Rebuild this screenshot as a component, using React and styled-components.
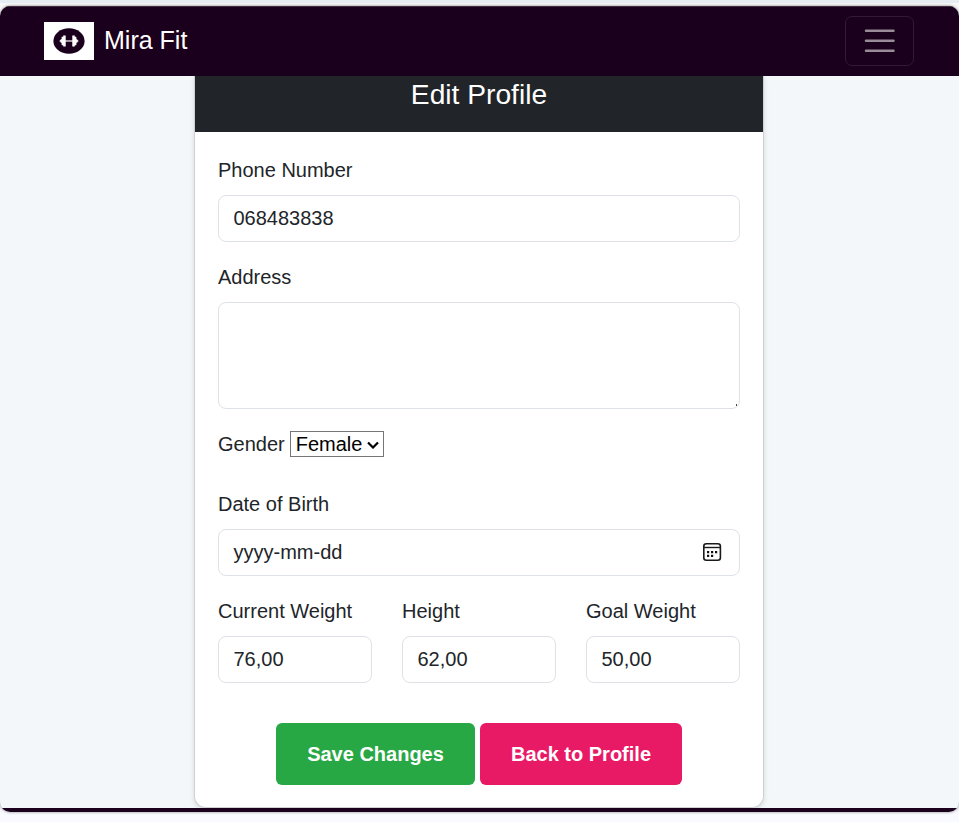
import React from 'react';
import styled, { createGlobalStyle } from 'styled-components';

const GlobalStyle = createGlobalStyle`
  *, *::before, *::after { box-sizing: border-box; }
  body {
    margin: 0;
    overflow: hidden;
    background: linear-gradient(#e6edf2 0 3px, #f8f8f8 3px 20px, #f9faff 790px);
    color: #212529;
    font: 20px/30px "Liberation Sans", Arial, sans-serif;
  }
`;

const Page = styled.div`
  height: 822px;
  padding-top: 6px;
`;

const Frame = styled.div`
  display: flex;
  flex-direction: column;
  height: 806px;
  overflow: hidden;
  border-radius: 10px;
  background: #f3f7fa;
  box-shadow: 0 0 3px rgba(0, 0, 0, 0.5);
`;

const Navbar = styled.header`
  display: flex;
  flex: none;
  align-items: center;
  justify-content: space-between;
  height: 70px;
  padding: 0 45px 1px 44px;
  background: #1b001d;
  border-top: 1px solid #3f2a42;
`;

const Brand = styled.a`
  display: flex;
  align-items: center;
  gap: 10px;
  color: #fff;
  font-size: 25px;
`;

const BrandName = styled.span`
  padding-bottom: 2px;
`;

const Logo = styled.svg`
  display: block;
  width: 50px;
  height: 38px;
  background: #fff;
`;

const Toggler = styled.button`
  display: flex;
  align-items: center;
  justify-content: center;
  width: 69px;
  height: 50px;
  padding: 0;
  border: 1px solid #321935;
  border-radius: 7px;
  background: transparent;
`;

const Main = styled.main`
  display: flex;
  flex: none;
  justify-content: center;
  height: 732px;
  padding-right: 1px;
`;

const Card = styled.section`
  display: flex;
  flex-direction: column;
  width: 570px;
  height: 732px;
  border: 1px solid #cfd0d1;
  border-top: 0;
  border-radius: 0 0 12px 12px;
  background: #fff;
  box-shadow: 0 2px 5px rgba(0, 0, 0, 0.12);
`;

const CardHeader = styled.h1`
  height: 56px;
  margin: 0;
  padding-top: 1px;
  background: #212529;
  color: #fff;
  font-size: 28.2px;
  font-weight: 400;
  line-height: 35px;
  text-align: center;
`;

const Form = styled.form`
  display: flex;
  flex-direction: column;
  gap: 20px;
  padding: 23px 23px 0;
`;

const Field = styled.div`
  display: flex;
  flex-direction: column;
  gap: 10px;
  min-width: 0;
`;

const Label = styled.label`
  height: 30px;
  white-space: nowrap;
`;

const Input = styled.input`
  width: 100%;
  height: 47px;
  padding: 0 14.5px;
  border: 1px solid #dee2e6;
  border-radius: 8px;
  background: #fff;
  color: #212529;
  font: inherit;
  outline: 0;
`;

const TextArea = styled(Input)`
  display: block;
  height: 107px;
  padding: 7px 15px;
  resize: vertical;

  &::-webkit-resizer {
    background: linear-gradient(#444, #444) no-repeat right 2px bottom 2px / 1px 2px;
  }
`;

const DateControl = styled.div`
  display: flex;
  align-items: center;
  justify-content: space-between;
  height: 47px;
  padding: 0 17px 2px 14.5px;
  border: 1px solid #dee2e6;
  border-radius: 8px;
`;

const GenderRow = styled.div`
  display: flex;
  align-items: center;
  gap: 5px;
  height: 30px;
  margin-bottom: 10px;
`;

const SelectBox = styled.div`
  display: grid;
  width: 94px;
  height: 26px;

  > * {
    grid-area: 1 / 1;
  }
`;

const Select = styled.select`
  appearance: none;
  width: 94px;
  height: 26px;
  padding: 0 0 0 5px;
  border: 1px solid #767676;
  border-radius: 0;
  background: #fff;
  color: #000;
  font: 20px "Liberation Sans", Arial, sans-serif;
`;

const Chevron = styled.svg`
  align-self: center;
  justify-self: end;
  width: 12px;
  height: 8px;
  margin: 1px 5px 0 0;
  pointer-events: none;
`;

const Measurements = styled.div`
  display: grid;
  grid-template-columns: repeat(3, 1fr);
  gap: 30px;
`;

const Actions = styled.div`
  display: flex;
  justify-content: center;
  gap: 5px;
  margin-top: 20px;
`;

const Button = styled.button`
  width: ${({ $width }) => $width}px;
  height: 62px;
  padding: 0;
  border: 0;
  border-radius: 6px;
  background: ${({ $color }) => $color};
  color: #fff;
  font: bold 20px "Liberation Sans", Arial, sans-serif;
`;

const Footer = styled.footer`
  flex: 1;
  background: #1b001d;
`;

function DumbbellLogo() {
  return (
    <Logo viewBox="0 0 50 38" aria-hidden="true">
      <ellipse cx="25" cy="19" rx="15.6" ry="12.8" fill="#1b001d" />
      <path d="M21 19h8" stroke="#d0c8d1" strokeWidth="1.7" />
      <path
        d="M15.7 19l2.2-2.3v-1.6h1.5v-1.3h2v10.4h-2v-1.3h-1.5v-1.6zM34.3 19l-2.2-2.3v-1.6h-1.5v-1.3h-2v10.4h2v-1.3h1.5v-1.6z"
        fill="#fff"
        stroke="#fff"
        strokeWidth=".6"
        strokeLinejoin="round"
      />
    </Logo>
  );
}

function MenuIcon() {
  return (
    <svg width="37.5" height="37.5" viewBox="0 0 30 30" fill="none" aria-hidden="true">
      <path d="M4 7h22M4 15h22M4 23h22" stroke="#fff" strokeOpacity=".55" strokeWidth="2" strokeLinecap="round" strokeMiterlimit="10" />
    </svg>
  );
}

function CalendarIcon() {
  return (
    <svg width="20" height="20" viewBox="0 0 20 20" fill="none" aria-hidden="true">
      <rect x="1.8" y="1.8" width="16.6" height="16.4" rx="2.5" stroke="#1a1a1a" strokeWidth="1.6" />
      <path d="M2 5.5h16" stroke="#1a1a1a" strokeWidth="1.4" />
      <path d="M5 9h2.2v2.2H5zM9 9h2.2v2.2H9zM13 9h2.2v2.2H13zM5 12.8h2.2V15H5zM9 12.8h2.2V15H9z" fill="#111" />
    </svg>
  );
}

const measurements = [
  { name: 'Current Weight', value: '76,00' },
  { name: 'Height', value: '62,00' },
  { name: 'Goal Weight', value: '50,00' },
];

export default function App() {
  return (
    <>
      <GlobalStyle />
      <Page>
        <Frame>
          <Navbar>
            <Brand><DumbbellLogo /><BrandName>Mira Fit</BrandName></Brand>
            <Toggler type="button" aria-label="Toggle navigation"><MenuIcon /></Toggler>
          </Navbar>
          <Main>
            <Card>
              <CardHeader>Edit Profile</CardHeader>
              <Form>
                <Field>
                  <Label htmlFor="phone">Phone Number</Label>
                  <Input id="phone" defaultValue="068483838" />
                </Field>
                <Field>
                  <Label htmlFor="address">Address</Label>
                  <TextArea as="textarea" id="address" />
                </Field>
                <GenderRow>
                  <Label htmlFor="gender">Gender</Label>
                  <SelectBox>
                    <Select id="gender" defaultValue="Female">
                      <option>Female</option>
                      <option>Male</option>
                    </Select>
                    <Chevron viewBox="0 0 12 8" aria-hidden="true">
                      <path d="M1 1.5l5 5 5-5" fill="none" stroke="#000" strokeWidth="2.2" />
                    </Chevron>
                  </SelectBox>
                </GenderRow>
                <Field>
                  <Label>Date of Birth</Label>
                  <DateControl>yyyy-mm-dd<CalendarIcon /></DateControl>
                </Field>
                <Measurements>
                  {measurements.map(({ name, value }) => (
                    <Field key={name}>
                      <Label htmlFor={name}>{name}</Label>
                      <Input id={name} defaultValue={value} />
                    </Field>
                  ))}
                </Measurements>
                <Actions>
                  <Button type="button" $width={199} $color="#28a745">Save Changes</Button>
                  <Button type="button" $width={202} $color="#e91a65">Back to Profile</Button>
                </Actions>
              </Form>
            </Card>
          </Main>
          <Footer />
        </Frame>
      </Page>
    </>
  );
}
